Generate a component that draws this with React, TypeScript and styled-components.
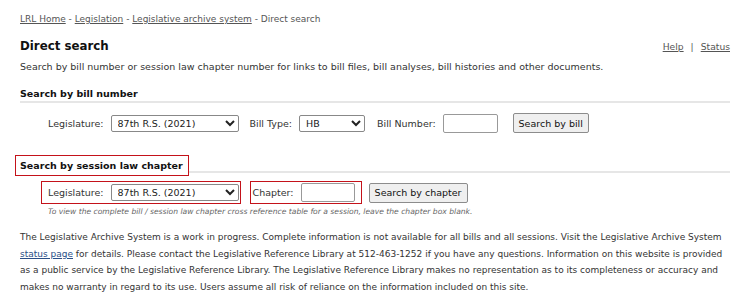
import React from 'react';
import styled, { createGlobalStyle } from 'styled-components';

const GlobalStyle = createGlobalStyle`
  html, body {
    margin: 0;
    padding: 0;
    background: #fff;
  }
  body {
    font-family: 'DejaVu Sans', Verdana, sans-serif;
    font-size: 9px;
    color: #333;
  }
`;

const Page = styled.div`
  width: 750px;
  height: 299px;
  overflow: hidden;
  padding: 13px 20px 0 20px;
  box-sizing: border-box;
`;

const Crumbs = styled.div`
  color: #555;
  line-height: 12px;

  a {
    color: #555;
    text-decoration: underline;
  }
`;

const TitleRow = styled.div`
  display: flex;
  justify-content: space-between;
  align-items: center;
  margin-top: 14px;
`;

const Title = styled.h1`
  margin: 0;
  font-size: 11.8px;
  font-weight: bold;
  color: #111;
`;

const TopLinks = styled.div`
  color: #555;
  display: flex;
  gap: 7px;
  font-size: 9.2px;

  a {
    color: #555;
    text-decoration: underline;
  }
`;

const Desc = styled.p`
  margin: 8px 0 0 0;
  line-height: 12px;
  font-size: 9.5px;
`;

const SectionHead = styled.div<{ $top: number }>`
  margin-top: ${(p) => p.$top}px;
  border-bottom: 2px solid #e6e6e6;
  display: flex;
`;

const SectionTitle = styled.span<{ $marked?: boolean }>`
  position: relative;
  font-weight: bold;
  font-size: 9.5px;
  color: #111;
  line-height: 13px;
  background: #fff;
  padding: ${(p) => (p.$marked ? '3px 5px 3px 4px' : '0 0 1px 0')};
  margin: ${(p) => (p.$marked ? '0 0 -5px -5px' : '0')};
  border: ${(p) => (p.$marked ? '1px solid #c4121a' : 'none')};
`;

const FormRow = styled.div<{ $top: number }>`
  display: flex;
  align-items: stretch;
  margin-top: ${(p) => p.$top}px;
  padding-left: 28px;
  font-size: 9.5px;
`;

const Field = styled.label<{ $marked?: boolean; $pl?: number; $pr?: number; $next: number }>`
  display: flex;
  align-items: center;
  gap: 7px;
  margin-right: ${(p) => p.$next}px;
  ${(p) =>
    p.$marked &&
    `
    border: 1px solid #c4121a;
    padding: 1px ${p.$pr ?? 1}px 1px ${p.$pl ?? 1}px;
    margin-left: -${(p.$pl ?? 1) + 1}px;
  `}
`;

const Select = styled.select<{ $w: number }>`
  width: ${(p) => p.$w}px;
  height: 17px;
  align-self: center;
  font-family: 'DejaVu Sans', Verdana, sans-serif;
  font-size: 9.5px;
  color: #222;
  border: 1px solid #888;
  border-radius: 2px;
  background: #fff;
  padding: 0 2px;
`;

const Input = styled.input<{ $w: number }>`
  width: ${(p) => p.$w}px;
  height: 19px;
  align-self: center;
  box-sizing: border-box;
  border: 1px solid #999;
  border-radius: 2px;
  padding: 0 3px;
`;

const Button = styled.button<{ $w: number }>`
  width: ${(p) => p.$w}px;
  height: 20px;
  align-self: center;
  font-family: 'DejaVu Sans', Verdana, sans-serif;
  font-size: 9.5px;
  color: #111;
  background: #efefef;
  border: 1px solid #8c8c8c;
  border-radius: 2px;
  padding: 0;
`;

const Note = styled.div`
  font-size: 7.6px;
  line-height: 10px;
  font-style: italic;
  color: #666;
  padding-left: 28px;
  margin-top: 3px;
`;

const Footer = styled.p`
  margin: 12px 0 0 0;
  line-height: 16.5px;
  width: 712px;

  a {
    color: #2a4f87;
    text-decoration: underline;
  }
`;

export default function App() {
  return (
    <>
      <GlobalStyle />
      <Page>
        <Crumbs>
          <a>LRL Home</a> - <a>Legislation</a> - <a>Legislative archive system</a> - Direct search
        </Crumbs>
        <TitleRow>
          <Title>Direct search</Title>
          <TopLinks>
            <a>Help</a>
            <span>|</span>
            <a>Status</a>
          </TopLinks>
        </TitleRow>
        <Desc>
          Search by bill number or session law chapter number for links to bill files, bill analyses, bill
          histories and other documents.
        </Desc>

        <SectionHead $top={14}>
          <SectionTitle>Search by bill number</SectionTitle>
        </SectionHead>
        <FormRow $top={10}>
          <Field $next={11}>
            Legislature:
            <Select $w={128} defaultValue="87">
              <option value="87">87th R.S. (2021)</option>
            </Select>
          </Field>
          <Field $next={12}>
            Bill Type:
            <Select $w={66} defaultValue="HB">
              <option value="HB">HB</option>
            </Select>
          </Field>
          <Field $next={15}>
            Bill Number:
            <Input $w={55} />
          </Field>
          <Button $w={76}>Search by bill</Button>
        </FormRow>

        <SectionHead $top={22}>
          <SectionTitle $marked>Search by session law chapter</SectionTitle>
        </SectionHead>
        <FormRow $top={8}>
          <Field $marked $pl={6} $pr={1} $next={12}>
            Legislature:
            <Select $w={128} defaultValue="87">
              <option value="87">87th R.S. (2021)</option>
            </Select>
          </Field>
          <Field $marked $pl={2} $pr={6} $next={7}>
            Chapter:
            <Input $w={54} />
          </Field>
          <Button $w={99}>Search by chapter</Button>
        </FormRow>
        <Note>
          To view the complete bill / session law chapter cross reference table for a session, leave the chapter
          box blank.
        </Note>

        <Footer>
          The Legislative Archive System is a work in progress. Complete information is not available for all
          bills and all sessions. Visit the Legislative Archive System <a>status page</a> for details. Please
          contact the Legislative Reference Library at 512-463-1252 if you have any questions. Information on
          this website is provided as a public service by the Legislative Reference Library. The Legislative
          Reference Library makes no representation as to its completeness or accuracy and makes no warranty in
          regard to its use. Users assume all risk of reliance on the information included on this site.
        </Footer>
      </Page>
    </>
  );
}
